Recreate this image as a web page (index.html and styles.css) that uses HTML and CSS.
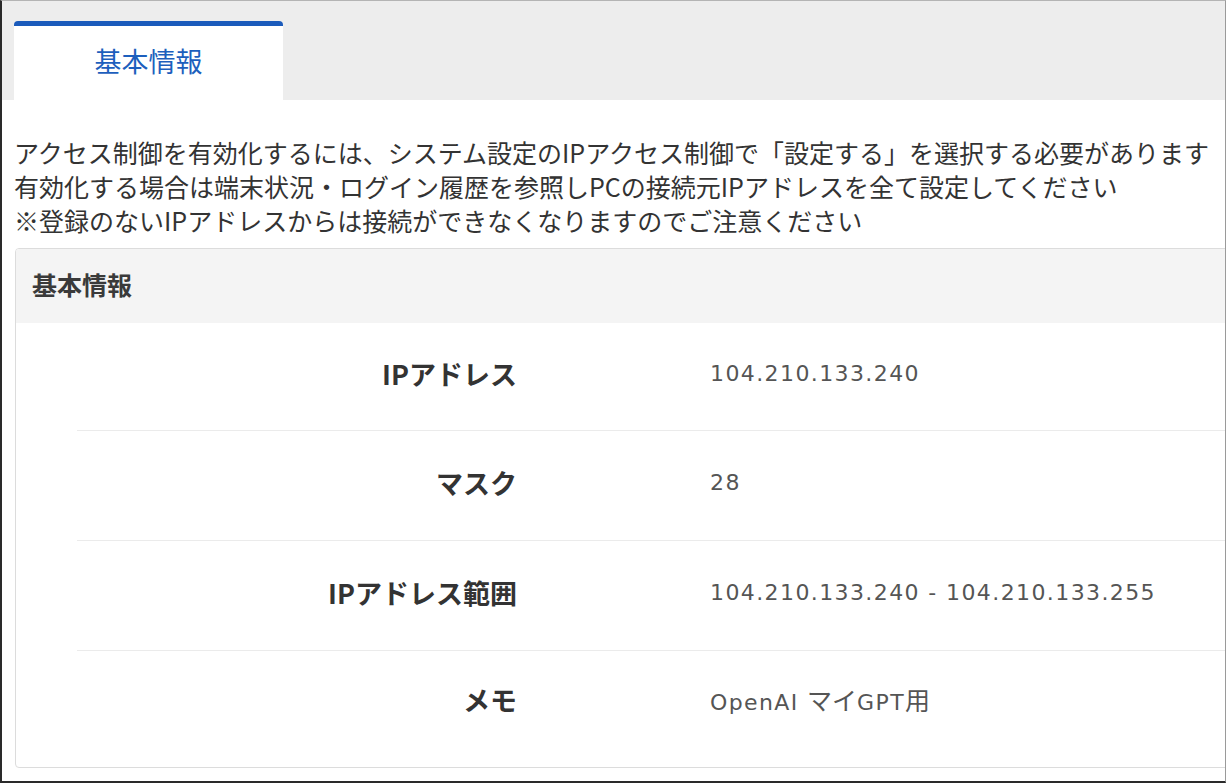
FILE: index.html
```html
<!DOCTYPE html>
<html lang="ja">
<head>
<meta charset="utf-8">
<link rel="stylesheet" href="styles.css">
</head>
<body>
<div class="frame">
  <div class="tabbar">
    <div class="tab">基本情報</div>
  </div>
  <div class="content">
    <div class="notice">
      <p>アクセス制御を有効化するには、システム設定のIPアクセス制御で「設定する」を選択する必要があります</p>
      <p>有効化する場合は端末状況・ログイン履歴を参照しPCの接続元IPアドレスを全て設定してください</p>
      <p>※登録のないIPアドレスからは接続ができなくなりますのでご注意ください</p>
    </div>
    <div class="card">
      <div class="card-header">基本情報</div>
      <div class="card-body">
        <div class="row">
          <div class="label">IPアドレス</div>
          <div class="value">104.210.133.240</div>
        </div>
        <div class="row">
          <div class="label">マスク</div>
          <div class="value">28</div>
        </div>
        <div class="row">
          <div class="label">IPアドレス範囲</div>
          <div class="value">104.210.133.240 - 104.210.133.255</div>
        </div>
        <div class="row last">
          <div class="label">メモ</div>
          <div class="value">OpenAI <span class="cjk">マイ</span>GPT<span class="cjk">用</span></div>
        </div>
      </div>
    </div>
  </div>
</div>
</body>
</html>
```

FILE: styles.css
```css
html, body {
  margin: 0;
  padding: 0;
  background: #ffffff;
}

body {
  font-family: "Noto Sans CJK JP", "Noto Sans", sans-serif;
  color: #333333;
}

.frame {
  box-sizing: border-box;
  width: 1226px;
  height: 783px;
  border-top: 1px solid #b4b4b4;
  border-left: 2px solid #2a2a2a;
  border-right: 1px solid #9a9a9a;
  border-bottom: 2px solid #2a2a2a;
  overflow: hidden;
  background: #ffffff;
}

.tabbar {
  background: #ededed;
  height: 99px;
  padding: 20px 0 0 12px;
  box-sizing: border-box;
  display: flex;
  align-items: flex-end;
}

.tab {
  width: 269px;
  height: 79px;
  box-sizing: border-box;
  background: #ffffff;
  border-top: 5px solid #1b5bbb;
  border-radius: 4px 4px 0 0;
  display: flex;
  align-items: center;
  justify-content: center;
  color: #1d5fbd;
  font-size: 27px;
  padding-bottom: 6px;
}

.content {
  padding: 35px 0 0 12px;
}

.notice p {
  margin: 0;
  font-size: 25px;
  line-height: 34px;
  color: #333333;
  white-space: nowrap;
}

.card {
  margin-top: 11px;
  margin-left: 1px;
  width: 1260px;
  border: 1px solid #dcdcdc;
  border-radius: 4px;
  overflow: hidden;
}

.card-header {
  background: #f4f4f4;
  height: 74px;
  box-sizing: border-box;
  display: flex;
  align-items: center;
  padding: 0 0 4px 16px;
  font-size: 25px;
  font-weight: bold;
  color: #3a3a3a;
}

.card-body {
  padding: 0 0 14px 61px;
}

.row {
  display: grid;
  grid-template-columns: 440px 1fr;
  align-items: center;
  height: 108px;
  box-sizing: border-box;
  padding-bottom: 6px;
  border-bottom: 1px solid #ebebeb;
}

.row + .row {
  height: 110px;
}

.row.last {
  border-bottom: none;
  height: 102px;
}

.label {
  text-align: right;
  font-size: 27px;
  font-weight: bold;
  color: #333333;
}

.value {
  padding-left: 193px;
  font-family: "DejaVu Sans", "Noto Sans CJK JP", sans-serif;
  font-size: 22px;
  color: #555555;
  letter-spacing: 1.4px;
}

.value .cjk {
  font-family: "Noto Sans CJK JP", sans-serif;
  font-size: 25px;
  letter-spacing: 0;
}
```
